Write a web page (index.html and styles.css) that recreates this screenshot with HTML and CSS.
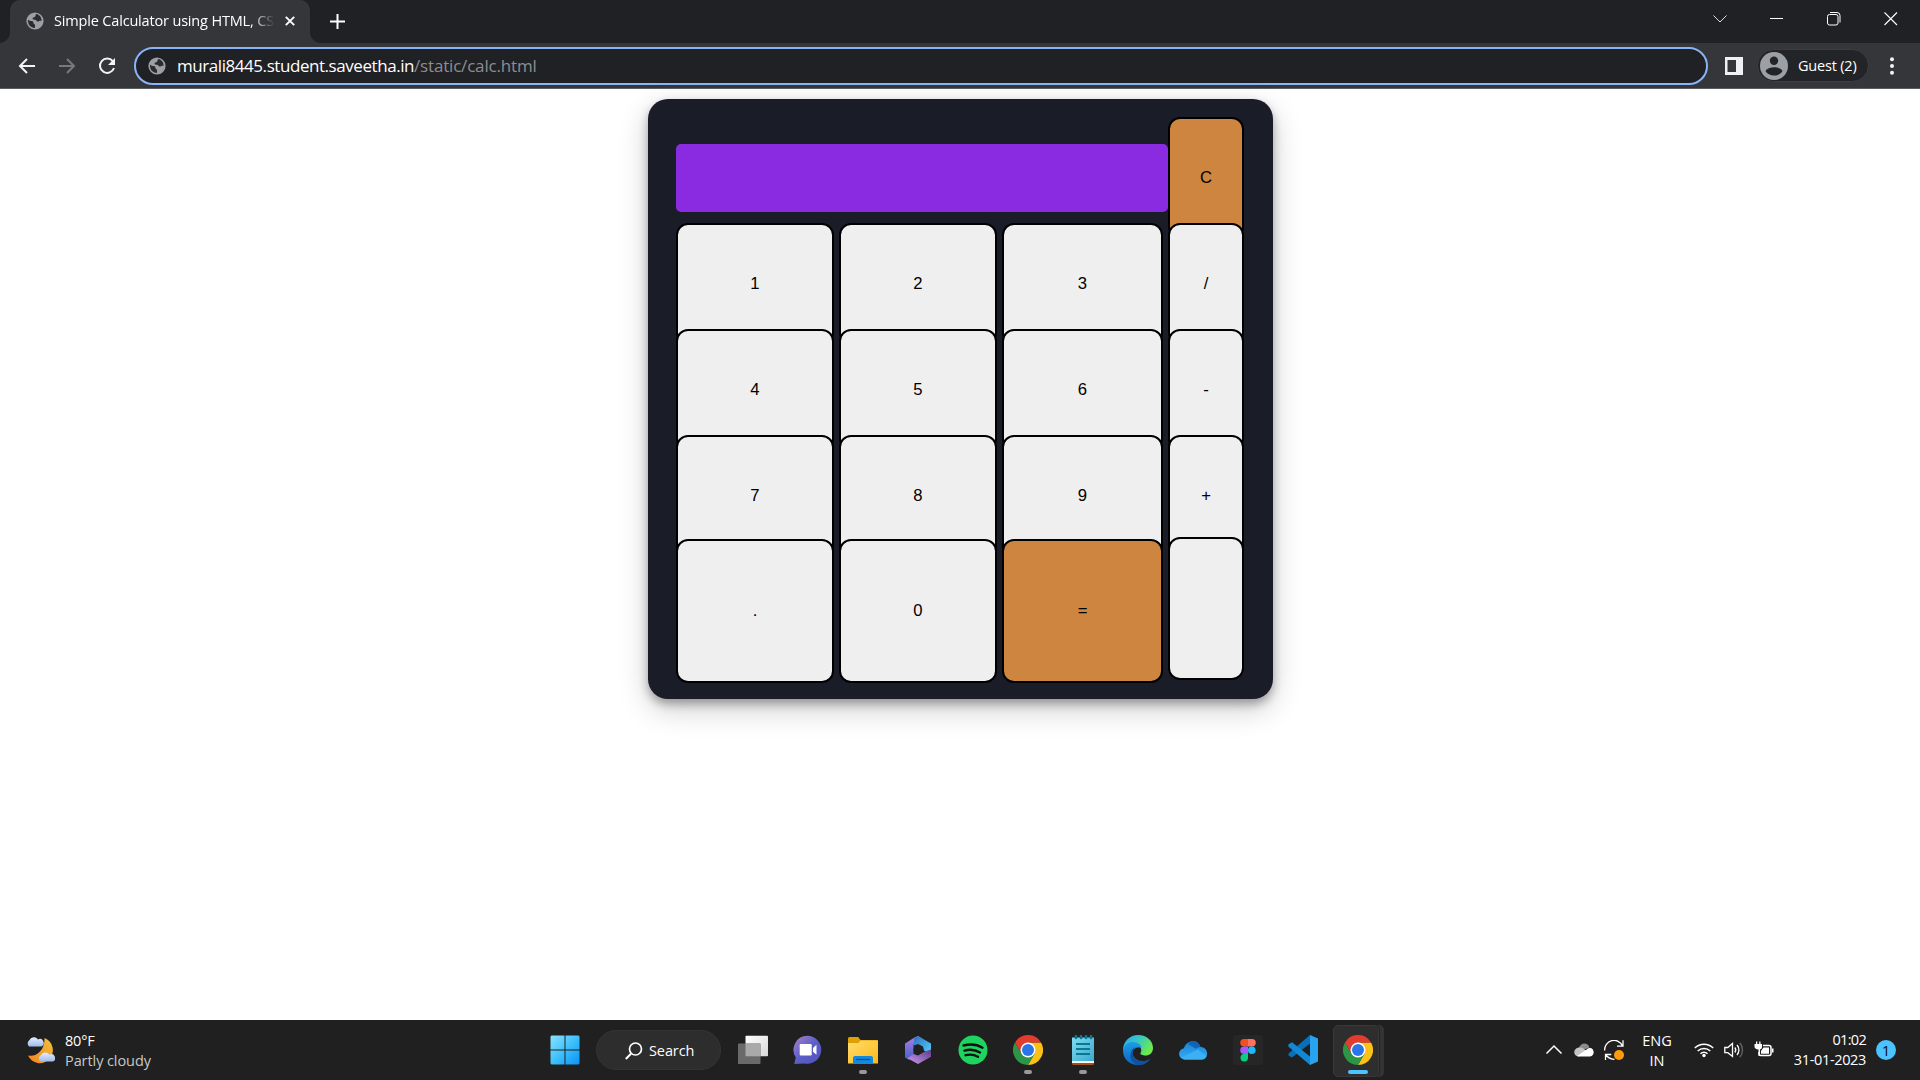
FILE: index.html
```html
<!DOCTYPE html>
<html lang="en">
<head>
<meta charset="utf-8">
<title>Simple Calculator using HTML, CSS and JavaScript</title>
<link rel="stylesheet" href="styles.css">
</head>
<body>
<svg class="defs" width="0" height="0" aria-hidden="true">
  <defs>
    <linearGradient id="win" x1="0" y1="0" x2="1" y2="1"><stop offset="0" stop-color="#8ae2ff"/><stop offset=".5" stop-color="#3fc0fb"/><stop offset="1" stop-color="#0a92f8"/></linearGradient>
    <linearGradient id="cloud" x1="0" y1="0" x2="0" y2="1"><stop offset="0" stop-color="#e6edfb"/><stop offset="1" stop-color="#9dbbee"/></linearGradient>
    <linearGradient id="moon" x1="1" y1="0" x2="0" y2="1"><stop offset="0" stop-color="#f0c23c"/><stop offset="1" stop-color="#f4831f"/></linearGradient>
    <linearGradient id="tv" x1="0" y1="0" x2="1" y2="1"><stop offset="0" stop-color="#fff"/><stop offset="1" stop-color="#d8d8d8"/></linearGradient>
    <linearGradient id="chat" x1="0" y1="0" x2="1" y2="1"><stop offset="0" stop-color="#a784c8"/><stop offset=".5" stop-color="#5b5fc7"/><stop offset="1" stop-color="#5050c0"/></linearGradient>
    <linearGradient id="folder" x1="0" y1="0" x2="1" y2="1"><stop offset="0" stop-color="#ffdd70"/><stop offset="1" stop-color="#fdb913"/></linearGradient>
    <linearGradient id="mA" x1="0" y1="0" x2="0" y2="1"><stop offset="0" stop-color="#b47be0"/><stop offset="1" stop-color="#3f63cf"/></linearGradient>
    <linearGradient id="mB" x1="0" y1="0" x2="1" y2="1"><stop offset="0" stop-color="#2d6fc4"/><stop offset="1" stop-color="#55d3f8"/></linearGradient>
    <linearGradient id="mC" x1="1" y1="0" x2="0" y2="1"><stop offset="0" stop-color="#5d3a86"/><stop offset="1" stop-color="#cf9af0"/></linearGradient>
    <linearGradient id="note" x1="0" y1="0" x2="1" y2="1"><stop offset="0" stop-color="#7fdcf0"/><stop offset="1" stop-color="#3aa9cb"/></linearGradient>
    <linearGradient id="eTop" x1="0" y1="0" x2="1" y2=".5"><stop offset="0" stop-color="#2aa7e8"/><stop offset=".5" stop-color="#36c8c4"/><stop offset="1" stop-color="#6bea4c"/></linearGradient>
    <linearGradient id="eLow" x1="0" y1="0" x2="0" y2="1"><stop offset="0" stop-color="#1f9be6"/><stop offset="1" stop-color="#0a66c2"/></linearGradient>
    <linearGradient id="od" x1="0" y1="0" x2="0" y2="1"><stop offset="0" stop-color="#1a80d8"/><stop offset="1" stop-color="#35aef2"/></linearGradient>
    <symbol id="globe" viewBox="0 0 18 18">
      <circle cx="9" cy="9" r="8.600" fill="#9aa0a6"/>
      <path d="M2 7.600c1.800 2.200 3 .8 4.600 1.600 1.500.8.300 2.200 1.500 2.900 1 .6 1.300 1.600.7 3.900C4.700 15.800 2 12.500 2 9zM10.300 2.100C9 3 10 4 9 4.800c-1 .7-2.300.4-2.400 1.700-.1 1.200 1.200 1.200 2.400 1.200 1.500 0 1.300 1.700 2.600 1.900 1.500.2 1.500-1.200 3.900-.6.300-3.200-1.600-6.200-5.200-6.900z" fill="#2b2c2f"/>
    </symbol>
    <symbol id="chrome" viewBox="0 0 30 30">
      <path d="M28 7.500A15 15 0 0 1 15 30l6.500-11.200L15 7.500z" fill="#fbc116"/>
      <path d="M2 7.500A15 15 0 0 0 15 30l6.500-11.200h-13z" fill="#2a9646"/>
      <path d="M15 7.500H28A15 15 0 0 0 2 7.500l6.500 11.300z" fill="#e33b2e"/>
      <circle cx="15" cy="15" r="7.500" fill="#fff"/><circle cx="15" cy="15" r="6" fill="#2a75e8"/>
    </symbol>
  </defs>
</svg>

<header class="browser">
  <div class="tabstrip">
    <div class="tab">
      <svg class="favicon"><use href="#globe"/></svg>
      <span class="tab-title">Simple Calculator using HTML, CS</span>
      <svg class="tab-close" viewBox="0 0 10 10"><path d="M.8.8l8.400 8.400M9.200.8L.8 9.200" stroke="#fff" stroke-width="1.900"/></svg>
    </div>
    <svg class="new-tab" viewBox="0 0 15 15"><path d="M7.500 0v15M0 7.500h15" stroke="#fff" stroke-width="2"/></svg>
    <div class="window-controls">
      <svg viewBox="0 0 14 14"><path d="M.5 3.500L7 10l6.500-6.500" fill="none" stroke="#ddd"/></svg>
      <svg viewBox="0 0 14 14"><path d="M0 6.500h13" stroke="#fff"/></svg>
      <svg viewBox="0 0 14 14"><rect x=".5" y="2.500" width="10.500" height="10.500" rx="2" fill="none" stroke="#fff"/><path d="M3 .5h7a3 3 0 0 1 3 3v7" fill="none" stroke="#fff"/></svg>
      <svg viewBox="0 0 14 14"><path d="M.5.5l12.500 12.500M13 .5L.5 13" stroke="#fff" stroke-width="1.100"/></svg>
    </div>
  </div>
  <div class="toolbar">
    <svg class="nav" viewBox="0 0 18 18"><path d="M17 9H2.500M9 2L2 9l7 7" fill="none" stroke="#f1f3f4" stroke-width="2"/></svg>
    <svg class="nav" viewBox="0 0 18 18"><path d="M1 9h14.500M9 2l7 7-7 7" fill="none" stroke="#77797c" stroke-width="2"/></svg>
    <svg class="nav" viewBox="0 0 18 18"><path d="M14.800 4.200A7.200 7.200 0 1 0 16 11" fill="none" stroke="#f1f3f4" stroke-width="2"/><path d="M17 1v7h-7z" fill="#f1f3f4"/></svg>
    <div class="omnibox">
      <svg class="site-icon"><use href="#globe"/></svg>
      <span class="url"><span class="host">murali8445.student.saveetha.in</span><span class="path">/static/calc.html</span></span>
    </div>
    <svg class="side-panel" viewBox="0 0 18 18"><path d="M0 0h18v18H0zM2.500 3v12h8.500V3z" fill="#f1f1f4" fill-rule="evenodd"/></svg>
    <div class="profile">
      <svg class="avatar" viewBox="0 0 28 28"><circle cx="14" cy="14" r="14" fill="#9aa0a6"/><circle cx="14" cy="8.700" r="4.200" fill="#232427"/><path d="M5.500 19c1.800-2.800 5.500-3.800 8.500-3.800s6.700 1 8.500 3.800c-1.800 2.800-4.700 4.600-8.500 4.600S7.300 21.800 5.500 19z" fill="#232427"/></svg>
      <span>Guest (2)</span>
    </div>
    <svg class="menu" viewBox="0 0 4 18"><circle cx="2" cy="2.200" r="2" fill="#f1f3f4"/><circle cx="2" cy="9" r="2" fill="#f1f3f4"/><circle cx="2" cy="15.800" r="2" fill="#f1f3f4"/></svg>
  </div>
</header>

<main class="page">
  <div class="calculator">
    <div class="display"></div>
    <button class="key accent">C</button>
    <button class="key">1</button><button class="key">2</button><button class="key">3</button><button class="key">/</button>
    <button class="key">4</button><button class="key">5</button><button class="key">6</button><button class="key">-</button>
    <button class="key">7</button><button class="key">8</button><button class="key">9</button><button class="key">+</button>
    <button class="key last">.</button><button class="key last">0</button><button class="key last accent">=</button><button class="key blank"></button>
  </div>
</main>

<footer class="taskbar">
  <div class="weather">
    <svg viewBox="0 0 30 30"><path d="M19.500 3A13 13 0 1 1 3 20.500c8 2 17-5 16.500-17.500z" fill="url(#moon)"/><path d="M4 11.500a4 4 0 0 1 .3-6.200 5 5 0 0 1 8.700-.9 3.700 3.700 0 0 1 3.500 7.100z" fill="url(#cloud)"/><path d="M15.500 26.500a3.500 3.500 0 0 1 .3-6.200 5 5 0 0 1 8.700-.6 3.500 3.500 0 0 1 3.500 6.800z" fill="url(#cloud)"/></svg>
    <div class="weather-text"><div>80°F</div><div class="condition">Partly cloudy</div></div>
  </div>
  <div class="apps">
    <div class="app"><svg viewBox="0 0 30 30"><path d="M1.500.5H14.500v14H.5v-13zM15.500 .5h13l1 1v13H15.500zM.5 15.500H14.500v14H1.500l-1-1zM15.500 15.500h14v13l-1 1H15.500z" fill="url(#win)"/></svg></div>
    <div class="search"><svg viewBox="0 0 18 18"><circle cx="10.500" cy="7" r="6" fill="none" stroke="#fff" stroke-width="1.700"/><path d="M6.200 11.500L.8 17" stroke="#fff" stroke-width="2"/></svg><span>Search</span></div>
    <div class="app"><svg viewBox="0 0 30 30"><rect x="7.500" y=".8" width="22.500" height="20.500" rx=".8" fill="url(#tv)"/><rect y="8.500" width="22.500" height="20.500" rx=".8" fill="#6a6a6a"/><path d="M7.500 8.500h15v12.800h-15z" fill="#a9a9a9"/></svg></div>
    <div class="app"><svg viewBox="0 0 30 30"><path d="M15 .8a14 14 0 1 1-4 27.600L1.300 29l1.500-6.500A14 14 0 0 1 15 .8z" fill="url(#chat)"/><rect x="6.700" y="9" width="12" height="11.500" rx="1.200" fill="#fff"/><path d="M20 13l3.500-3.300v10L20 16.800z" fill="#fff"/></svg></div>
    <div class="app running"><svg viewBox="0 0 30 30"><path d="M0 3.500Q0 2 1.500 2h8.700l2.300 3H29q1 0 1 1.500V12H0z" fill="#dfa006"/><path d="M0 8h10.500l2-2.500H30V28.500H0z" fill="url(#folder)"/><path d="M5 28.500V23q0-2 2-2h16q2 0 2 2v5.500z" fill="#1389dd"/><path d="M8 24.500h14" stroke="#064d99" stroke-width="1.200"/></svg></div>
    <div class="app"><svg viewBox="0 0 30 30"><path d="M2 8.500L11.500 2.500 15 1l4 2.500-8.500 6v10.500L6 25l-4-2.500z" fill="url(#mA)"/><path d="M11 3.200L15 1l13 7.500V20l-7-4.500-1-4L15 9l-4 1.500z" fill="url(#mB)"/><path d="M28 14.500v7.200L15 29 4.500 23.300 10.500 19l4.500 1.500L21 17z" fill="url(#mC)"/><circle cx="15" cy="14.800" r="4.600" fill="#202020"/></svg></div>
    <div class="app"><svg viewBox="0 0 30 30"><circle cx="15" cy="15" r="14.500" fill="#1ed35f"/><path d="M5.500 10.500c6.500-1.800 13.500-1.200 19 2.200M6.500 15.600c5.500-1.500 11-.8 15.500 1.900M7.500 20.200c4.500-1.200 8.500-.7 12.500 1.600" fill="none" stroke="#111" stroke-width="2.400" stroke-linecap="round"/></svg></div>
    <div class="app running"><svg><use href="#chrome"/></svg></div>
    <div class="app running"><svg viewBox="0 0 30 30"><path d="M4 26h22v2.500q0 1.500-1.500 1.500h-19Q4 30 4 28.500z" fill="#a5500f"/><path d="M4 24h22v4H4z" fill="#f5f5f5"/><path d="M4 2.500h22V26H4z" fill="url(#note)"/><path d="M8 1v2M13 1v2M18 1v2M23 1v2" stroke="#087896" stroke-width="2.600" stroke-linecap="round"/><path d="M8 9h14M8 14h14M8 19h14" stroke="#087896" stroke-width="2"/></svg></div>
    <div class="app"><svg viewBox="0 0 30 30"><path d="M0 15.500C0 6 7 0 15 0c9 0 15 6 15 13 0 5-3.500 7.500-7.500 7.500-3 0-5.500-1-5-2.500 2-3 .5-8-6.500-9C6 8.500 2 11 0 15.500z" fill="url(#eTop)"/><path d="M0 15.500C1 9.500 5.500 7 10 7c5 0 8.500 3 8.500 6-7-2-10.500 3-8.500 9 1.200 4 5 7 9 7.500C9 31.500 0 26 0 15.500z" fill="url(#eLow)"/><path d="M12.500 12C8 16 9 22.500 15 25c4.500 2 9 1 12.500-1.500C24 29 19 30.500 15 30c-6-1.500-8.500-6-7.500-11 .5-3.500 2.500-6 5-7z" fill="#10529f"/></svg></div>
    <div class="app"><svg viewBox="0 0 30 30"><path d="M7 24.500C-.5 24 -.8 14.500 6 13.200 8.500 4.500 19.500 3.800 22.500 12c8 0 9 11.500 1.500 12.500z" fill="url(#od)"/><path d="M10 9C13 4.500 20.500 5 22.500 12c-2 0-3.500 1-4.500 1.800z" fill="#0f64b5"/><path d="M3.200 22.500L20 14.500l8.500 7q-1.500 3-4.500 3H7q-2.500 0-3.800-2z" fill="#3bb0f3"/></svg></div>
    <div class="app"><svg viewBox="0 0 30 30"><rect width="30" height="30" rx="2" fill="#262626"/><path d="M15 4v7.500h-4a3.750 3.750 0 0 1 0-7.500z" fill="#f24e1e"/><path d="M15 4h4a3.750 3.750 0 0 1 0 7.500h-4z" fill="#ff7262"/><path d="M15 11.500V19h-4a3.750 3.750 0 0 1 0-7.500z" fill="#a259ff"/><circle cx="18.800" cy="15.200" r="3.800" fill="#1abcfe"/><path d="M15 19v3.500A3.750 3.750 0 1 1 11 19z" fill="#0acf83"/></svg></div>
    <div class="app"><svg viewBox="0 0 30 30"><path d="M22 0v8.500L4 22.500.5 20.500v-2z" fill="#0a6fb8"/><path d="M22 30v-8.500L4 7.300.3 9.500v2z" fill="#1288d3"/><path d="M22 0l8 3.500v23L22 30z" fill="#27a3f0"/></svg></div>
    <div class="app active"><svg><use href="#chrome"/></svg></div>
  </div>
  <div class="tray">
    <div class="cell chevron"><svg viewBox="0 0 20 20"><path d="M2.500 13.500L10 6l7.500 7.500" fill="none" stroke="#fff" stroke-width="1.500"/></svg></div>
    <div class="cell cloud"><svg viewBox="0 0 20 20"><path d="M5 8C6.500 2 14 2 15.500 7.500L9 10z" fill="#8c8c8c"/><path d="M4.500 16.500C-1.500 16-1 8 5 7.500c3-.5 5 1 7 3l-7 6z" fill="#c4c4c4"/><path d="M3 16L14 8.500c6-2.500 8 7 2 8H4.500z" fill="#fff"/></svg></div>
    <div class="cell sync"><svg viewBox="0 0 20 20"><path d="M.7 10.500A9.300 9.300 0 0 1 18.500 6M19 .3v5.900H13M1.500 20v-5.500H7.300M1.700 14.700Q4.500 19 10.500 19.400" fill="none" stroke="#fff" stroke-width="1.300"/><circle cx="15" cy="15" r="5" fill="#ff9b0a"/></svg></div>
    <div class="lang"><div>ENG</div><div>IN</div></div>
    <div class="cell wifi"><svg viewBox="0 0 20 20"><path d="M.8 8a13 13 0 0 1 18.400 0M3.700 11a9 9 0 0 1 12.600 0M6.500 13.800a5 5 0 0 1 7 0" fill="none" stroke="#fff" stroke-width="1.500"/><circle cx="10" cy="15.500" r="1.700" fill="#fff"/></svg></div>
    <div class="cell speaker"><svg viewBox="0 0 20 20"><path d="M.8 7.500h3L8.500 3.500v13L3.800 12.700h-3z" fill="none" stroke="#fff" stroke-width="1.300"/><path d="M10.800 7.500a4 4 0 0 1 0 5M13 5a7.500 7.500 0 0 1 0 10" fill="none" stroke="#fff" stroke-width="1.300"/><path d="M15.800 2.800a11 11 0 0 1 0 14.500" fill="none" stroke="#666" stroke-width="1.300"/></svg></div>
    <div class="cell battery"><svg viewBox="0 0 20 20"><path d="M9 5.500h6q2 0 2 2v6q0 2-2 2H7q-2 0-2-2V12" fill="none" stroke="#fff" stroke-width="1.500"/><path d="M18 8.500h1.500v4H18zM9.500 7.500h5.500v6.200H7V11z" fill="#fff"/><path d="M.5 4h7.500v3q0 2-2 2.500V16H4.500V9.500q-4-.5-4-3zM2 1.500h1.300V4H2zM5.200 1.500h1.300V4H5.200z" fill="#fff"/></svg></div>
    <div class="clock"><div class="time">01:02</div><div>31-01-2023</div></div>
    <div class="badge">1</div>
  </div>
</footer>
</body>
</html>
```
FILE: styles.css
```css
* { box-sizing: border-box; }
html, body { height: 100%; }
body {
  margin: 0;
  display: flex;
  flex-direction: column;
  overflow: hidden;
  background: #fff;
  font-family: "Open Sans", "Noto Sans", sans-serif;
}
svg { display: block; flex: none; }
.defs { position: absolute; }

/* Browser chrome */
.browser { flex: none; height: 89px; background: #35363a; border-bottom: 1px solid #5c5d60; }
.tabstrip { height: 43px; display: flex; align-items: center; background: #202124; padding-left: 10px; }
.tab {
  position: relative;
  width: 300px;
  height: 43px;
  display: flex;
  align-items: center;
  padding: 0 15px 1px 16px;
  background: #35363a;
  border-radius: 10px 10px 0 0;
}
.tab::before, .tab::after {
  content: "";
  position: absolute;
  bottom: 0;
  width: 10px;
  height: 10px;
}
.tab::before { left: -10px; background: radial-gradient(circle at 0 0, #202124 9.500px, #35363a 10px); }
.tab::after { right: -10px; background: radial-gradient(circle at 100% 0, #202124 9.500px, #35363a 10px); }
.favicon { width: 18px; height: 18px; }
.tab-title {
  flex: none;
  margin-left: 10px;
  white-space: nowrap;
  font-size: 14.500px;
  line-height: 20px;
  letter-spacing: -.17px;
  color: #fff;
  -webkit-mask-image: linear-gradient(90deg, #000 197px, transparent 221px);
  mask-image: linear-gradient(90deg, #000 197px, transparent 221px);
}
.tab-close { width: 10px; height: 10px; margin-left: auto; }
.new-tab { width: 15px; height: 15px; margin-left: 20px; }
.window-controls { margin: 0 22px 6px auto; display: flex; gap: 43px; }
.window-controls svg { width: 14px; height: 14px; }

.toolbar { height: 45px; display: flex; align-items: center; padding: 0 26px 0 18px; }
.nav { width: 18px; height: 18px; }
.nav + .nav { margin-left: 22px; }
.omnibox {
  width: 1574px;
  height: 38px;
  margin-left: 18px;
  margin-top: 1px;
  padding-left: 12px;
  display: flex;
  align-items: center;
  background: #202124;
  border: 2px solid #8ab4f8;
  border-radius: 19px;
}
.site-icon { width: 18px; height: 18px; }
.url { margin-left: 11px; font-size: 17px; line-height: 24px; white-space: nowrap; }
.host { color: #fff; letter-spacing: -.44px; }
.path { color: #8c8e91; letter-spacing: -.18px; }
.side-panel { width: 18px; height: 18px; margin-left: 17px; }
.profile {
  width: 112px;
  height: 33px;
  margin-left: 14px;
  padding-left: 2px;
  display: flex;
  align-items: center;
  gap: 10px;
  border-radius: 17px;
  border: 1px solid #3d3e42;
  background: #232427;
  color: #fff;
  font-size: 14.500px;
  letter-spacing: -.2px;
  white-space: nowrap;
}
.avatar { width: 28px; height: 28px; }
.menu { width: 4px; height: 18px; margin-left: auto; }

/* Calculator */
.page { flex: 1; padding-top: 10px; }
.calculator {
  width: 625px;
  height: 600px;
  margin: 0 0 0 648px;
  padding: 18px 29px 0 28px;
  display: grid;
  grid-template-columns: 158px 158px 161px 76px;
  grid-template-rows: 106px 106px 106px 104px 144px;
  column-gap: 5px;
  background: #1a1c28;
  border-radius: 20px;
  box-shadow: 0 5px 10px rgba(0, 0, 0, .3), 0 10px 30px rgba(0, 0, 0, .2);
}
.display {
  grid-column: 1 / 4;
  height: 68px;
  margin: 27px -5px 0 0;
  background: #8a2be2;
  border-radius: 5px;
}
.key {
  height: 122px;
  padding: 0;
  position: relative;
  background: #efefef;
  border: 2px solid #000;
  border-radius: 12px;
  color: #000;
  font: 16.670px "Liberation Sans", Arial, sans-serif;
}
.key.accent { background: #cd853f; }
.key.last { height: 144px; }
.key.blank { height: 143px; margin-top: -2px; }

/* Taskbar */
.taskbar {
  flex: none;
  height: 60px;
  display: flex;
  background: #202020;
  color: #fff;
  font-size: 14.500px;
  line-height: 20px;
}
.weather { width: 537px; padding: 0 0 1px 25px; display: flex; align-items: center; gap: 10px; letter-spacing: -.2px; }
.weather svg { width: 30px; height: 30px; }
.weather-text { padding-top: 2px; }
.condition { color: #c8c8c8; letter-spacing: -.08px; }
.apps { display: flex; align-items: center; }
.app { position: relative; width: 55px; height: 50px; display: flex; align-items: center; justify-content: center; }
.app svg { width: 30px; height: 30px; }
.search {
  width: 125px;
  height: 40px;
  margin: 0 4px;
  padding: 1px 0 0 28px;
  display: flex;
  align-items: center;
  gap: 6px;
  border-radius: 20px;
  border: 1px solid #343434;
  background: #2d2d2d;
  letter-spacing: -.1px;
}
.search svg { width: 18px; height: 18px; }
.running::after, .active::after {
  content: "";
  position: absolute;
  bottom: 1px;
  left: 24px;
  width: 8px;
  height: 4px;
  border-radius: 2px;
  background: #999;
}
.active::after { left: 18px; width: 20px; background: #4cc2ff; }
.active::before {
  content: "";
  position: absolute;
  left: 3px;
  top: 0;
  width: 44px;
  height: 50px;
  border-radius: 5px;
  background: #2e2e2e;
  border: 1px solid #393939;
  box-shadow: 1px 0 0 #222, 5px 0 0 #343434;
}
.active svg { position: relative; }
.tray { margin-left: auto; padding-right: 24px; display: flex; align-items: center; }
.cell { display: flex; justify-content: center; }
.cell svg { width: 20px; height: 20px; }
.chevron, .sync { width: 28px; }
.cloud { width: 32px; }
.lang { width: 58px; padding-top: 1px; text-align: center; }
.wifi, .battery { width: 36px; }
.speaker { width: 24px; }
.clock { width: 84px; text-align: right; white-space: nowrap; letter-spacing: -.35px; }
.time { letter-spacing: -.7px; }
.badge {
  width: 20px;
  height: 20px;
  margin-left: 10px;
  border-radius: 50%;
  background: #4cc2ff;
  color: #111;
  font-size: 15px;
  text-align: center;
}
```
